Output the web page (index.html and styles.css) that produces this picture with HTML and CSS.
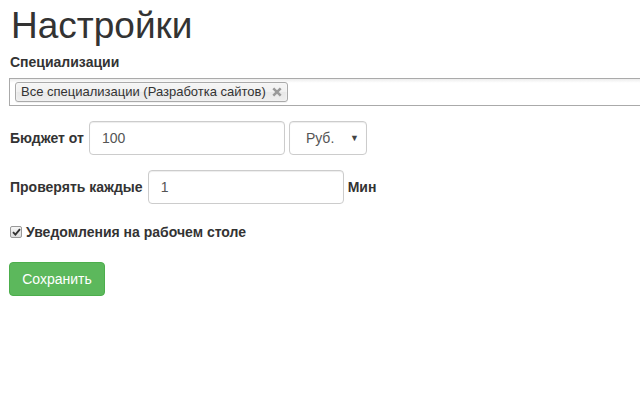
FILE: index.html
```html
<!DOCTYPE html>
<html lang="ru">
<head>
<meta charset="utf-8">
<title>Настройки</title>
<link rel="stylesheet" href="styles.css">
</head>
<body>
<div class="page">
  <h1 class="title">Настройки</h1>
  <div class="group">
    <label class="label spaced">Специализации</label>
    <div class="chosen">
      <span class="tag">Все специализации (Разработка сайтов)<svg class="tag-x" width="10" height="10" viewBox="0 0 10 10"><path d="M1.3 1.3 L8.7 8.7 M8.7 1.3 L1.3 8.7" stroke="#999" stroke-width="2.5"/></svg></span>
    </div>
  </div>
  <div class="group row">
    <label class="label inline">Бюджет от</label>
    <div class="input">100</div>
    <div class="select">Руб.<span class="caret">▼</span></div>
  </div>
  <div class="group row">
    <label class="label inline">Проверять каждые</label>
    <div class="input">1</div>
    <label class="label inline after">Мин</label>
  </div>
  <div class="group check">
    <span class="checkbox"><svg width="9" height="8" viewBox="0 0 9 8"><path d="M1 4.2 L3.4 6.6 L8 1.2" fill="none" stroke="#333" stroke-width="1.9"/></svg></span>
    <label class="label">Уведомления на рабочем столе</label>
  </div>
  <button class="btn">Сохранить</button>
</div>
</body>
</html>
```
FILE: styles.css
```css
html, body {
  margin: 0;
  padding: 0;
  overflow: hidden;
  background: #fff;
}
body {
  font-family: "Liberation Sans", Arial, sans-serif;
  font-size: 14px;
  line-height: 20px;
  color: #333;
}
.page {
  padding: 0 0 0 9px;
}
.title {
  font-size: 37px;
  font-weight: 400;
  line-height: 40px;
  margin: 6px 0 6px 2px;
  color: #333;
}
.label {
  font-weight: 700;
  display: block;
  margin: 0 0 5px 1px;
}
.label.spaced {
  margin-bottom: 6px;
}
.label.inline {
  margin: 0 5px 0 1px;
}
.label.after {
  margin: 0 0 0 4px;
}
.group {
  margin-bottom: 15px;
}
.chosen {
  border: 1px solid #aaa;
  border-right: none;
  height: 24px;
  background: linear-gradient(#eee 1%, #fff 15%);
  padding: 2px 0 0 5px;
  box-sizing: content-box;
  margin-right: -10px;
}
.tag {
  display: inline-flex;
  align-items: center;
  height: 18px;
  padding: 0 5px 0 5px;
  border: 1px solid #aaa;
  border-radius: 3px;
  background: linear-gradient(#f4f4f4 20%, #f0f0f0 50%, #e8e8e8 52%, #eee);
  box-shadow: 0 0 2px #fff inset, 0 1px 0 rgba(0,0,0,.05);
  font-size: 13px;
  color: #333;
  line-height: 18px;
}
.tag-x {
  margin-left: 6px;
}
.row {
  display: flex;
  align-items: center;
}
.input, .select {
  box-sizing: border-box;
  height: 34px;
  border: 1px solid #ccc;
  border-radius: 4px;
  box-shadow: inset 0 1px 1px rgba(0,0,0,.075);
  color: #555;
  font-size: 14px;
  line-height: 20px;
  padding: 6px 12px;
}
.input {
  width: 196px;
}
.select {
  width: 78px;
  margin-left: 4px;
  display: flex;
  justify-content: space-between;
  padding: 6px 7px 6px 16px;
}
.caret {
  font-size: 9px;
  color: #444;
}
.check {
  display: flex;
  align-items: center;
  margin-top: 18px;
}
.check .label {
  margin: 0 0 0 4px;
}
.checkbox {
  box-sizing: border-box;
  width: 12px;
  height: 12px;
  margin-left: 1px;
  border: 1px solid #999;
  border-radius: 2px;
  background: linear-gradient(#f6f6f6, #ddd);
  display: flex;
  align-items: center;
  justify-content: center;
}
.btn {
  display: block;
  margin-top: 20px;
  height: 34px;
  width: 96px;
  padding: 6px 12px;
  font-family: "Liberation Sans", Arial, sans-serif;
  font-size: 14px;
  line-height: 20px;
  color: #fff;
  background: #5cb85c;
  border: 1px solid #4cae4c;
  border-radius: 4px;
}
```
